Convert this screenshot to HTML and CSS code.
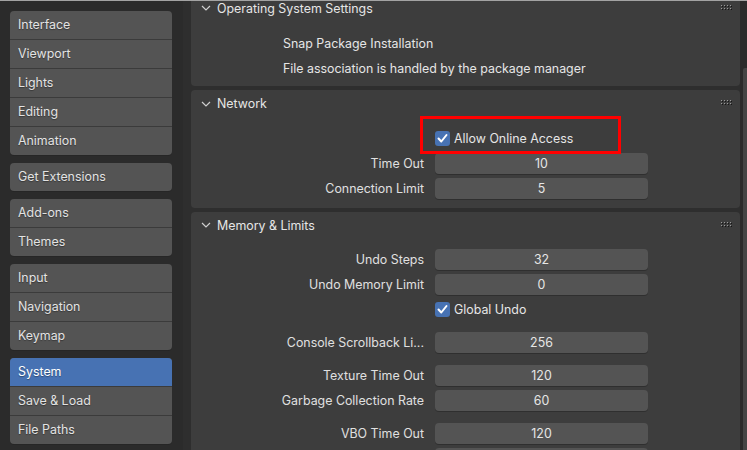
FILE: index.html
```html
<!DOCTYPE html>
<html>
<head>
<meta charset="utf-8">
<link rel="stylesheet" href="styles.css">
</head>
<body>
<div class="topline"></div>
<div class="app">
  <nav class="sidebar">
    <div class="group">
      <div class="nav-item">Interface</div>
      <div class="nav-item">Viewport</div>
      <div class="nav-item">Lights</div>
      <div class="nav-item">Editing</div>
      <div class="nav-item">Animation</div>
    </div>
    <div class="group">
      <div class="nav-item">Get Extensions</div>
    </div>
    <div class="group">
      <div class="nav-item">Add-ons</div>
      <div class="nav-item">Themes</div>
    </div>
    <div class="group">
      <div class="nav-item">Input</div>
      <div class="nav-item">Navigation</div>
      <div class="nav-item">Keymap</div>
    </div>
    <div class="group">
      <div class="nav-item active">System</div>
      <div class="nav-item">Save &amp; Load</div>
      <div class="nav-item">File Paths</div>
    </div>
  </nav>
  <main class="main">
    <div class="panels">
      <section class="panel first">
        <div class="panel-header">
          <svg class="chev" width="10" height="6" viewBox="0 0 10 6"><polyline points="1,1 5,5 9,1" fill="none" stroke="#cfcfcf" stroke-width="1.2"/></svg>
          <span class="title">Operating System Settings</span>
          <svg class="dots" width="12" height="6" viewBox="0 0 12 6"><g fill="#151515"><rect x="1" y="1" width="1" height="1"/><rect x="4" y="1" width="1" height="1"/><rect x="7" y="1" width="1" height="1"/><rect x="10" y="1" width="1" height="1"/><rect x="1" y="4" width="1" height="1"/><rect x="4" y="4" width="1" height="1"/><rect x="7" y="4" width="1" height="1"/><rect x="10" y="4" width="1" height="1"/></g><g fill="#9a9a9a"><rect x="0" y="0" width="1" height="1"/><rect x="3" y="0" width="1" height="1"/><rect x="6" y="0" width="1" height="1"/><rect x="9" y="0" width="1" height="1"/><rect x="0" y="3" width="1" height="1"/><rect x="3" y="3" width="1" height="1"/><rect x="6" y="3" width="1" height="1"/><rect x="9" y="3" width="1" height="1"/></g></svg>
        </div>
        <div class="panel-body os-body">
          <div class="text-row">Snap Package Installation</div>
          <div class="text-row">File association is handled by the package manager</div>
        </div>
      </section>

      <section class="panel network">
        <div class="panel-header">
          <svg class="chev" width="10" height="6" viewBox="0 0 10 6"><polyline points="1,1 5,5 9,1" fill="none" stroke="#cfcfcf" stroke-width="1.2"/></svg>
          <span class="title">Network</span>
          <svg class="dots" width="12" height="6" viewBox="0 0 12 6"><g fill="#151515"><rect x="1" y="1" width="1" height="1"/><rect x="4" y="1" width="1" height="1"/><rect x="7" y="1" width="1" height="1"/><rect x="10" y="1" width="1" height="1"/><rect x="1" y="4" width="1" height="1"/><rect x="4" y="4" width="1" height="1"/><rect x="7" y="4" width="1" height="1"/><rect x="10" y="4" width="1" height="1"/></g><g fill="#9a9a9a"><rect x="0" y="0" width="1" height="1"/><rect x="3" y="0" width="1" height="1"/><rect x="6" y="0" width="1" height="1"/><rect x="9" y="0" width="1" height="1"/><rect x="0" y="3" width="1" height="1"/><rect x="3" y="3" width="1" height="1"/><rect x="6" y="3" width="1" height="1"/><rect x="9" y="3" width="1" height="1"/></g></svg>
        </div>
        <div class="panel-body net-body">
          <div class="prop">
            <span class="label"></span>
            <span class="check-wrap"><span class="checkbox"><svg width="15" height="15" viewBox="0 0 15 15"><polyline points="3.5,7.5 6.3,10.5 11.5,4" fill="none" stroke="#ffffff" stroke-width="2" stroke-linecap="round" stroke-linejoin="round"/></svg></span><span class="check-label">Allow Online Access</span></span>
          </div>
          <div class="prop"><span class="label">Time Out</span><span class="field">10</span></div>
          <div class="prop"><span class="label">Connection Limit</span><span class="field">5</span></div>
        </div>
        <div class="highlight"></div>
      </section>

      <section class="panel">
        <div class="panel-header">
          <svg class="chev" width="10" height="6" viewBox="0 0 10 6"><polyline points="1,1 5,5 9,1" fill="none" stroke="#cfcfcf" stroke-width="1.2"/></svg>
          <span class="title">Memory &amp; Limits</span>
          <svg class="dots" width="12" height="6" viewBox="0 0 12 6"><g fill="#151515"><rect x="1" y="1" width="1" height="1"/><rect x="4" y="1" width="1" height="1"/><rect x="7" y="1" width="1" height="1"/><rect x="10" y="1" width="1" height="1"/><rect x="1" y="4" width="1" height="1"/><rect x="4" y="4" width="1" height="1"/><rect x="7" y="4" width="1" height="1"/><rect x="10" y="4" width="1" height="1"/></g><g fill="#9a9a9a"><rect x="0" y="0" width="1" height="1"/><rect x="3" y="0" width="1" height="1"/><rect x="6" y="0" width="1" height="1"/><rect x="9" y="0" width="1" height="1"/><rect x="0" y="3" width="1" height="1"/><rect x="3" y="3" width="1" height="1"/><rect x="6" y="3" width="1" height="1"/><rect x="9" y="3" width="1" height="1"/></g></svg>
        </div>
        <div class="panel-body">
          <div class="prop"><span class="label">Undo Steps</span><span class="field">32</span></div>
          <div class="prop"><span class="label">Undo Memory Limit</span><span class="field">0</span></div>
          <div class="prop">
            <span class="label"></span>
            <span class="check-wrap"><span class="checkbox"><svg width="15" height="15" viewBox="0 0 15 15"><polyline points="3.5,7.5 6.3,10.5 11.5,4" fill="none" stroke="#ffffff" stroke-width="2" stroke-linecap="round" stroke-linejoin="round"/></svg></span><span class="check-label">Global Undo</span></span>
          </div>
          <div class="spacer"></div>
          <div class="prop"><span class="label">Console Scrollback Li...</span><span class="field">256</span></div>
          <div class="spacer"></div>
          <div class="prop"><span class="label">Texture Time Out</span><span class="field">120</span></div>
          <div class="prop"><span class="label">Garbage Collection Rate</span><span class="field">60</span></div>
          <div class="spacer"></div>
          <div class="prop"><span class="label">VBO Time Out</span><span class="field">120</span></div>
          <div class="prop"><span class="label"></span><span class="field"></span></div>
        </div>
      </section>
    </div>
    <div class="scroll"><div class="thumb"></div></div>
  </main>
</div>
</body>
</html>
```

FILE: styles.css
```css
* { box-sizing: border-box; }
html, body {
  margin: 0;
  padding: 0;
  width: 747px;
  height: 450px;
  overflow: hidden;
  background: #2b2b2b;
  font-family: Inter, "Noto Sans", sans-serif;
  font-size: 12.4px;
  color: #e6e6e6;
}
.topline {
  height: 1px;
  background: #a3a3a3;
  position: relative;
  z-index: 2;
}
.app {
  display: flex;
  height: 449px;
}
.sidebar {
  width: 183px;
  flex: none;
  background: #2b2b2b;
  padding: 10px 11px 0 10px;
  display: flex;
  flex-direction: column;
  gap: 8px;
}
.group {
  background: #545454;
  border-radius: 4px;
  overflow: hidden;
  box-shadow: 0 1px 0 #262626;
}
.nav-item {
  height: 29px;
  line-height: 28px;
  padding-left: 8px;
  border-bottom: 1px solid #3b3b3b;
  color: #e3e3e3;
  text-shadow: 0 1px 1px rgba(0,0,0,0.35);
}
.nav-item:last-child {
  height: 28px;
  border-bottom: none;
}
.nav-item.active {
  background: #4772b3;
  color: #ffffff;
}
.main {
  flex: 1;
  display: flex;
  background: #2e2e2e;
  overflow: hidden;
}
.panels {
  flex: 1;
  padding-left: 8px;
  display: flex;
  flex-direction: column;
  gap: 4px;
}
.panel {
  background: #3d3d3d;
  border-radius: 4px;
  position: relative;
  flex: none;
}
.panel.first {
  margin-top: -6px;
}
.panel-header {
  height: 26px;
  display: flex;
  align-items: center;
  padding-left: 10px;
  padding-right: 7px;
}
.network .panel-header {
  padding-top: 1px;
}
.chev {
  flex: none;
  margin-right: 6px;
}
.title {
  flex: 1;
  color: #e6e6e6;
}
.dots {
  flex: none;
  margin-top: -1px;
}
.panel-body {
  padding: 9px 0 8px 0;
}
.net-body {
  padding: 10px 0 7px 0;
}
.os-body {
  padding: 10px 0 5px 92px;
}
.text-row {
  height: 25px;
  line-height: 25px;
  color: #e6e6e6;
}
.prop {
  display: grid;
  grid-template-columns: 233px 213px;
  column-gap: 11px;
  height: 25px;
  align-items: center;
}
.label {
  text-align: right;
  color: #e0e0e0;
  white-space: nowrap;
}
.field {
  height: 21px;
  line-height: 21px;
  background: #545454;
  border-radius: 4px;
  text-align: center;
  color: #e6e6e6;
  box-shadow: 0 1px 0 #2f2f2f;
}
.check-wrap {
  display: flex;
  align-items: center;
  gap: 4px;
}
.checkbox {
  width: 15px;
  height: 15px;
  border-radius: 3px;
  background: #4772b3;
  display: flex;
  flex: none;
}
.check-label {
  color: #e6e6e6;
  white-space: nowrap;
}
.spacer {
  height: 8px;
}
.highlight {
  position: absolute;
  left: 229px;
  top: 26px;
  width: 201px;
  height: 38px;
  border: 3px solid #ff0000;
}
.scroll {
  width: 7px;
  flex: none;
  padding-left: 3px;
  padding-top: 67px;
  background: #2b2b2b;
}
.thumb {
  width: 4px;
  height: 400px;
  background: #454545;
  border-radius: 2px 0 0 0;
}
```
